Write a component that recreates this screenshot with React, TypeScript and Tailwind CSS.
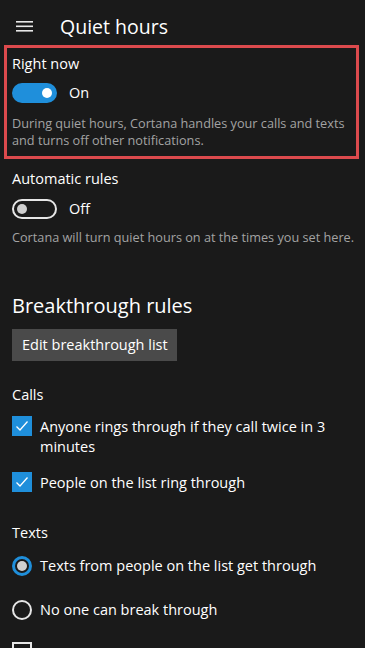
import React, { useState } from 'react';

const FONT = { fontFamily: '"Open Sans", "Noto Sans", sans-serif' };

function Toggle({ on }: { on: boolean }) {
  return on ? (
    <div className="w-[45px] h-[20px] rounded-full bg-[#1f8fdb] flex items-center justify-end pr-[5px] shrink-0">
      <div className="w-[10px] h-[10px] rounded-full bg-white" />
    </div>
  ) : (
    <div className="w-[45px] h-[20px] rounded-full border-2 border-[#e6e6e6] flex items-center pl-[3px] shrink-0">
      <div className="w-[10px] h-[10px] rounded-full bg-[#cfcfcf]" />
    </div>
  );
}

function CheckBox({ checked }: { checked: boolean }) {
  return checked ? (
    <div className="w-[20px] h-[20px] bg-[#1f8fdb] flex items-center justify-center shrink-0">
      <svg width="14" height="14" viewBox="0 0 14 14" fill="none">
        <path d="M1.5 7.5 L5 11 L12.5 2.5" stroke="white" strokeWidth="1.3" />
      </svg>
    </div>
  ) : (
    <div className="w-[20px] h-[20px] border-2 border-[#e6e6e6] shrink-0" />
  );
}

function Radio({ selected }: { selected: boolean }) {
  return selected ? (
    <div className="w-[20px] h-[20px] rounded-full border-[3px] border-[#1f8fdb] flex items-center justify-center shrink-0">
      <div className="w-[10px] h-[10px] rounded-full bg-[#d0d0d0]" />
    </div>
  ) : (
    <div className="w-[20px] h-[20px] rounded-full border-2 border-[#e6e6e6] shrink-0" />
  );
}

export default function App() {
  const [rightNow] = useState(true);
  const [auto] = useState(false);

  return (
    <div className="w-[365px] h-[648px] overflow-hidden bg-[#1a1a1a] text-white" style={FONT}>
      {/* Header */}
      <div className="flex items-center h-[45px] pt-[8px]">
        <svg className="ml-4" width="17" height="12" viewBox="0 0 17 12" fill="#e8e8e8">
          <rect x="0" y="0" width="17" height="1.6" />
          <rect x="0" y="4.5" width="17" height="1.6" />
          <rect x="0" y="9" width="17" height="1.6" />
        </svg>
        <h1 className="ml-[27px] text-[19.5px] leading-[28px]">Quiet hours</h1>
      </div>

      {/* Right now (highlighted) */}
      <div className="ml-[4px] w-[355px] border-[3px] border-[#dc4a4d] pl-[5px] pt-[6px] pb-[7px]">
        <div className="text-[14.5px] leading-[20px]">Right now</div>
        <div className="flex items-center gap-3 mt-[9px]">
          <Toggle on={rightNow} />
          <span className="text-[14.5px] leading-[20px]">On</span>
        </div>
        <p className="mt-[12px] text-[12.7px] leading-[17px] text-[#a3a3a3]">
          During quiet hours, Cortana handles your calls and texts and turns off other notifications.
        </p>
      </div>

      <div className="px-3">
        {/* Automatic rules */}
        <div className="mt-[10px] text-[14.5px] leading-[20px]">Automatic rules</div>
        <div className="flex items-center gap-3 mt-[10px]">
          <Toggle on={auto} />
          <span className="text-[14.5px] leading-[20px]">Off</span>
        </div>
        <p className="mt-[10px] text-[12.7px] leading-[17px] text-[#a3a3a3] whitespace-nowrap">
          Cortana will turn quiet hours on at the times you set here.
        </p>

        {/* Breakthrough rules */}
        <h2 className="mt-[46px] text-[20px] leading-[28px]">Breakthrough rules</h2>
        <button className="mt-[9px] w-[165px] h-[32px] bg-[#4a4a4a] text-[14.5px] text-left pl-[10px]">
          Edit breakthrough list
        </button>

        <div className="mt-[24px] text-[14.5px] leading-[20px]">Calls</div>
        <div className="flex items-start gap-2 mt-[11px]">
          <CheckBox checked />
          <span className="mt-[1px] text-[14.5px] leading-[20px]">Anyone rings through if they call twice in 3 minutes</span>
        </div>
        <div className="flex items-start gap-2 mt-[15px]">
          <CheckBox checked />
          <span className="mt-[1px] text-[14.5px] leading-[20px]">People on the list ring through</span>
        </div>

        <div className="mt-[30px] text-[14.5px] leading-[20px]">Texts</div>
        <div className="flex items-start gap-2 mt-[13px]">
          <Radio selected />
          <span className="text-[14.5px] leading-[20px]">Texts from people on the list get through</span>
        </div>
        <div className="flex items-start gap-2 mt-[24px]">
          <Radio selected={false} />
          <span className="text-[14.5px] leading-[20px]">No one can break through</span>
        </div>
        <div className="flex items-start gap-2 mt-[22px]">
          <CheckBox checked={false} />
        </div>
      </div>
    </div>
  );
}
